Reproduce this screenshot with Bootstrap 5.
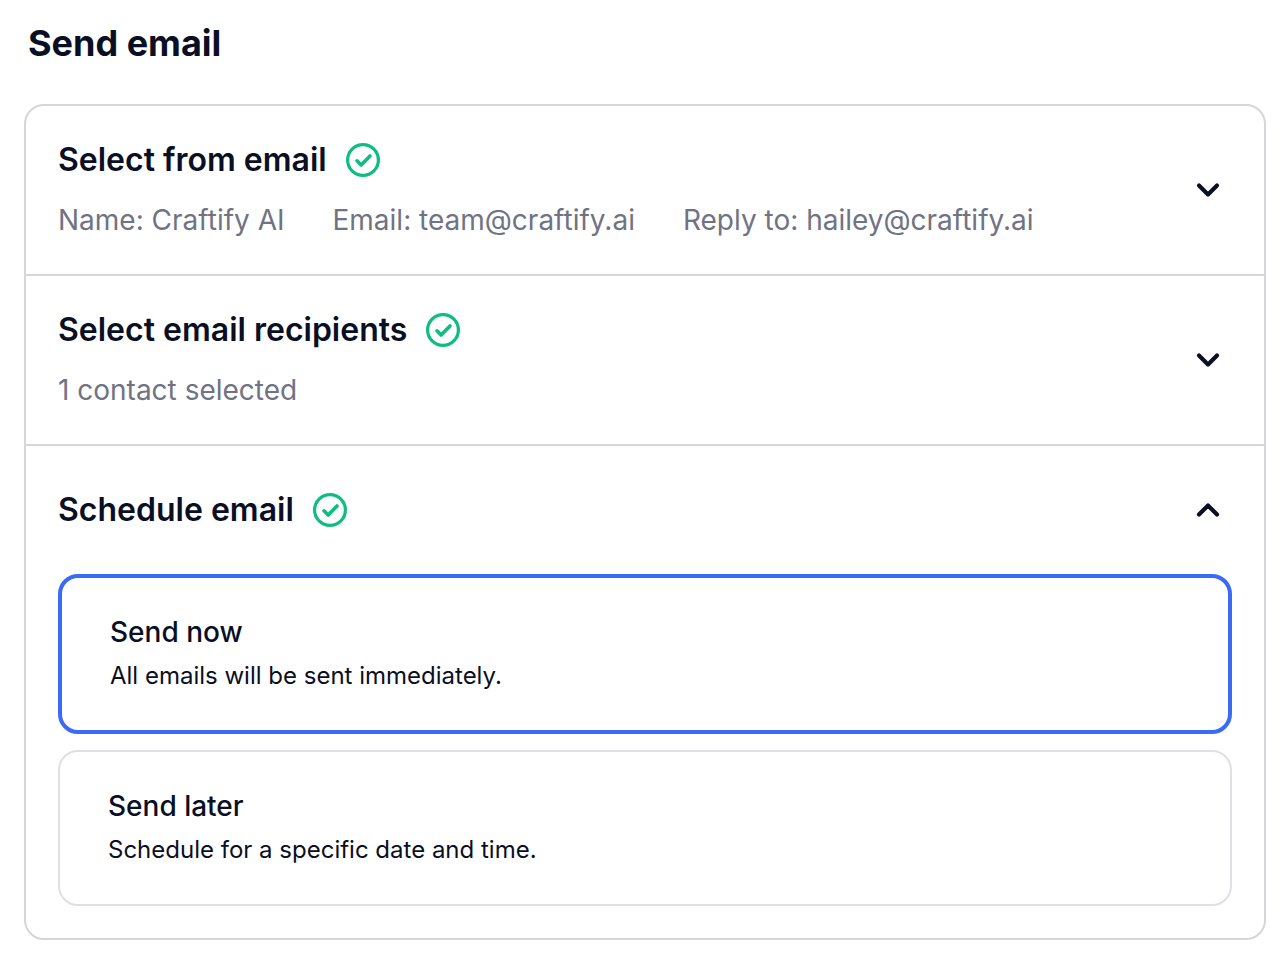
<!DOCTYPE html>
<html lang="en">
<head>
<meta charset="utf-8">
<title>Send email</title>
<link href="https://cdn.jsdelivr.net/npm/bootstrap@5.3.0/dist/css/bootstrap.min.css" rel="stylesheet">
<style>
body { font-family: Inter, "Liberation Sans", sans-serif; color: #0a0f24; background: #fff; }
.page-wrap { padding: 18px 16px 0 24px; }
.page-title { font-size: 36px; font-weight: 700; line-height: 50px; margin: 0 0 36px 4px; color: #0a0f24; }
.outer-box { border: 2px solid #d5d5dd; border-radius: 20px; }
.step { padding: 32px 44px 32px 32px; border-bottom: 2px solid #d5d5dd; }
.step-open { padding: 42px 32px 32px; }
.step-head { margin-right: 12px; margin-bottom: 42px; }
.step-title { font-size: 32px; font-weight: 600; line-height: 44px; margin: 0; color: #0a0f24; }
.step-meta { font-size: 28px; line-height: 44px; color: #6f7384; margin-top: 16px; gap: 48px; }
.opt { border-radius: 20px; }
.opt-on { border: 4px solid #3b6bf5; padding: 34px 48px 0; height: 160px; }
.opt-off { border: 2px solid #e0e0e4; padding: 34px 48px 0; height: 156px; margin-top: 16px; }
.opt-name { font-size: 28px; line-height: 40px; font-weight: 500; }
.opt-desc { font-size: 24px; line-height: 36px; margin-top: 6px; }
.check-ic { gap: 19px; }
</style>
</head>
<body>
<div class="page-wrap">
  <h1 class="page-title">Send email</h1>
  <div class="outer-box">
    <div class="step d-flex justify-content-between align-items-center">
      <div>
        <div class="d-flex align-items-center check-ic">
          <h2 class="step-title">Select from email</h2>
          <svg width="34" height="34" viewBox="1 1 34 34" fill="none" stroke="#0dbd82" stroke-width="3.2" stroke-linecap="round" stroke-linejoin="round"><circle cx="18" cy="18" r="15.4"/><path stroke-width="3.6" d="M12 18.8l4.2 4.2L25 14"/></svg>
        </div>
        <div class="step-meta d-flex"><span>Name: Craftify AI</span><span>Email: team@craftify.ai</span><span>Reply to: hailey@craftify.ai</span></div>
      </div>
      <svg width="24" height="16" viewBox="0 0 24 16" fill="none" stroke="#0a0f24" stroke-width="4.2" stroke-linecap="round" stroke-linejoin="round"><path d="M3 3.5l9 9 9-9"/></svg>
    </div>
    <div class="step d-flex justify-content-between align-items-center">
      <div>
        <div class="d-flex align-items-center check-ic">
          <h2 class="step-title">Select email recipients</h2>
          <svg width="34" height="34" viewBox="1 1 34 34" fill="none" stroke="#0dbd82" stroke-width="3.2" stroke-linecap="round" stroke-linejoin="round"><circle cx="18" cy="18" r="15.4"/><path stroke-width="3.6" d="M12 18.8l4.2 4.2L25 14"/></svg>
        </div>
        <div class="step-meta d-flex"><span>1 contact selected</span></div>
      </div>
      <svg width="24" height="16" viewBox="0 0 24 16" fill="none" stroke="#0a0f24" stroke-width="4.2" stroke-linecap="round" stroke-linejoin="round"><path d="M3 3.5l9 9 9-9"/></svg>
    </div>
    <div class="step-open">
      <div class="step-head d-flex justify-content-between align-items-center">
        <div class="d-flex align-items-center check-ic">
          <h2 class="step-title">Schedule email</h2>
          <svg width="34" height="34" viewBox="1 1 34 34" fill="none" stroke="#0dbd82" stroke-width="3.2" stroke-linecap="round" stroke-linejoin="round"><circle cx="18" cy="18" r="15.4"/><path stroke-width="3.6" d="M12 18.8l4.2 4.2L25 14"/></svg>
        </div>
        <svg width="24" height="16" viewBox="0 0 24 16" fill="none" stroke="#0a0f24" stroke-width="4.2" stroke-linecap="round" stroke-linejoin="round"><path d="M3 12.5l9-9 9 9"/></svg>
      </div>
      <div class="opt opt-on">
        <div class="opt-name">Send now</div>
        <div class="opt-desc">All emails will be sent immediately.</div>
      </div>
      <div class="opt opt-off">
        <div class="opt-name">Send later</div>
        <div class="opt-desc">Schedule for a specific date and time.</div>
      </div>
    </div>
  </div>
</div>
<script src="https://cdn.jsdelivr.net/npm/bootstrap@5.3.0/dist/js/bootstrap.bundle.min.js"></script>
</body>
</html>
